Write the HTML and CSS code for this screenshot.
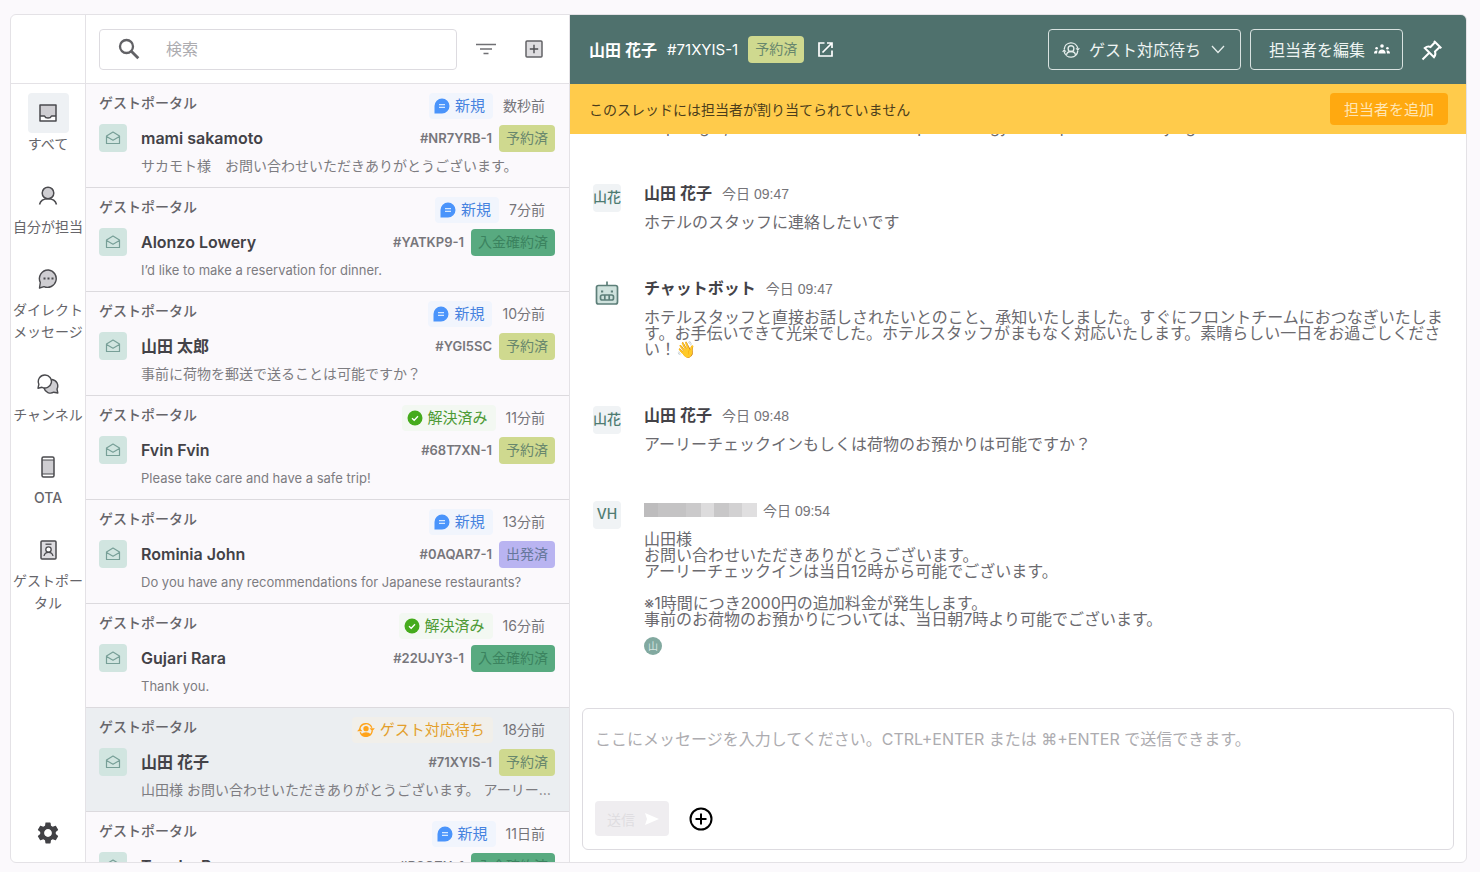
FILE: index.html
```html
<!DOCTYPE html>
<html lang="ja">
<head>
    <meta charset="UTF-8">
    <meta name="viewport" content="width=device-width, initial-scale=1.0">
    <title>メッセージ</title>
    <link rel="stylesheet" href="styles.css">
</head>
<body>
    <!-- shared icons -->
    <svg class="sprite" aria-hidden="true">
        <symbol id="mail" viewBox="0 0 16 16"><path d="M1.5 6 8 2l6.500 4v7.500h-13zM1.500 6.500 8 10.200l6.500-3.700" fill="none" stroke="currentColor" stroke-width="1.200" stroke-linejoin="round"/></symbol>
        <symbol id="new" viewBox="0 0 16 16"><path d="M8 .5a7.500 7.500 0 1 1 0 15H.5V8A7.500 7.500 0 0 1 8 .5z" fill="#4a94fb"/><path d="M5 6.700h6M5 9.300h6" stroke="#d5e8ff" stroke-width="1.200"/></symbol>
        <symbol id="done" viewBox="0 0 16 16"><circle cx="8" cy="8" r="7.500" fill="#45ab1c"/><path d="m5 8.200 2.200 2.100L11 6.300" fill="none" stroke="#fff" stroke-width="1.300"/></symbol>
        <symbol id="wait" viewBox="0 0 20 18"><g fill="none" stroke="currentColor" stroke-width="1.500"><path d="M3 8a7 7 0 0 1 13.500-1.500M17 10A7 7 0 0 1 3.500 11.500"/></g><path d="M14 7h6l-3 3.500zM0 10.500h6L3 7z" fill="currentColor"/><circle cx="10" cy="7.500" r="3" fill="currentColor"/><path d="M4.800 14c2-3.400 8.400-3.400 10.400 0-2.500 3-7.900 3-10.400 0z" fill="currentColor"/></symbol>
    </svg>

    <div class="app">
        <nav class="sidebar">
            <div class="sidebar-top"></div>
            <div class="menu">
                <a href="#" class="menu-item active">
                    <span class="menu-icon"><svg width="20" height="20" viewBox="0 0 20 20"><path d="M2 2h16v16H2z" fill="#cfced2"/><path d="M2 13h4.500c1 3 6 3 7 0H18v5H2z" fill="#fff"/><path d="M2 2h16v16H2zM2 13h4.500c1 2.700 6 2.700 7 0H18" fill="none" stroke="#4a4a4e" stroke-width="1.500" stroke-linejoin="round"/></svg></span>
                    <span>すべて</span>
                </a>
                <a href="#" class="menu-item">
                    <span class="menu-icon"><svg width="20" height="20" viewBox="0 0 20 20"><circle cx="10" cy="7" r="5.800" fill="#cfced2" stroke="#4a4a4e" stroke-width="1.500"/><path d="M1.500 18.500c1-4 4-5.700 8.500-5.700s7.500 1.700 8.500 5.700" fill="none" stroke="#4a4a4e" stroke-width="1.500"/></svg></span>
                    <span>自分が担当</span>
                </a>
                <a href="#" class="menu-item">
                    <span class="menu-icon"><svg width="20" height="20" viewBox="0 0 20 20"><path d="M10.500 1A8.700 8.700 0 1 1 6 17.600L1.500 19l.8-5.500A8.700 8.700 0 0 1 10.500 1z" fill="#cfced2" stroke="#4a4a4e" stroke-width="1.400" stroke-linejoin="round"/><path d="M5.500 9.500h2m2 0h2m2 0h2" stroke="#4a4a4e" stroke-width="2"/></svg></span>
                    <span>ダイレクトメッセージ</span>
                </a>
                <a href="#" class="menu-item">
                    <span class="menu-icon"><svg width="22" height="20" viewBox="0 0 22 20"><path d="M15 5.500a6.500 6.500 0 0 1 5 9.500l.8 4-4-.8A6.700 6.700 0 0 1 7 14z" fill="#cfced2" stroke="#4a4a4e" stroke-width="1.400" stroke-linejoin="round"/><path d="M8 1a6.500 6.500 0 1 1-3 12.300l-4 .9.900-4A6.500 6.500 0 0 1 8 1z" fill="#fff" stroke="#4a4a4e" stroke-width="1.400" stroke-linejoin="round"/></svg></span>
                    <span>チャンネル</span>
                </a>
                <a href="#" class="menu-item">
                    <span class="menu-icon"><svg width="14" height="22" viewBox="0 0 14 22"><rect x="1" y="1" width="12" height="20" rx="1.500" fill="#cfced2"/><path d="M1 1h12v3H1zM1 18h12v3H1z" fill="#fff"/><rect x="1" y="1" width="12" height="20" rx="1.500" fill="none" stroke="#4a4a4e" stroke-width="1.500"/><path d="M1 4h12M1 18h12" stroke="#4a4a4e" stroke-width="1.200"/></svg></span>
                    <span class="menu-latin">OTA</span>
                </a>
                <a href="#" class="menu-item">
                    <span class="menu-icon"><svg width="17" height="20" viewBox="0 0 17 20"><rect x="1" y="1" width="15" height="18" rx="1" fill="#dddce0" stroke="#4a4a4e" stroke-width="1.500"/><path d="M5.500 4.200h6" stroke="#4a4a4e" stroke-width="1.300"/><circle cx="8.500" cy="9.500" r="2.700" fill="#fff" stroke="#4a4a4e" stroke-width="1.300"/><path d="M4 16c.5-2.700 2-3.700 4.500-3.700s4 1 4.500 3.700" fill="none" stroke="#4a4a4e" stroke-width="1.300"/></svg></span>
                    <span>ゲストポータル</span>
                </a>
            </div>
            <button class="settings" aria-label="設定"><svg width="26" height="26" viewBox="0 0 24 24"><path fill="#414145" d="M19.140 12.940c.04-.3.060-.61.060-.94 0-.32-.02-.64-.07-.94l2.030-1.580a.49.49 0 0 0 .12-.61l-1.920-3.320a.488.488 0 0 0-.59-.22l-2.390.96c-.5-.38-1.030-.7-1.620-.94l-.36-2.540a.484.484 0 0 0-.48-.41h-3.840c-.24 0-.43.17-.47.41l-.36 2.540c-.59.24-1.130.57-1.620.94l-2.390-.96c-.22-.08-.47 0-.59.22L2.740 8.870c-.12.21-.08.47.12.610l2.030 1.580c-.05.3-.09.63-.09.940s.02.64.07.940l-2.030 1.580a.49.49 0 0 0-.12.610l1.920 3.320c.12.22.37.29.59.22l2.390-.96c.5.38 1.030.7 1.620.94l.36 2.540c.05.24.24.41.48.410h3.840c.24 0 .44-.17.47-.41l.36-2.540c.59-.24 1.130-.56 1.620-.94l2.390.96c.22.08.47 0 .59-.22l1.920-3.320c.12-.22.070-.47-.12-.61l-2.010-1.580zM12 15.600c-1.980 0-3.600-1.620-3.600-3.600s1.620-3.600 3.600-3.600 3.600 1.620 3.600 3.600-1.620 3.600-3.600 3.600z"/></svg></button>
        </nav>

        <section class="inbox">
            <div class="inbox-top">
                <label class="search">
                    <svg width="22" height="22" viewBox="0 0 22 22"><circle cx="8.500" cy="8.500" r="6.500" fill="none" stroke="#626266" stroke-width="2.300"/><path d="m13.300 13.300 7 7" stroke="#626266" stroke-width="2.800"/></svg>
                    <input type="search" placeholder="検索" aria-label="検索">
                </label>
                <button class="icon-btn" aria-label="絞り込み"><svg width="20" height="12" viewBox="0 0 20 12"><path d="M0 1.500h20M4 6h12M7.500 10.500h5" stroke="#707074" stroke-width="1.500"/></svg></button>
                <button class="icon-btn" aria-label="新規作成"><svg width="18" height="18" viewBox="0 0 18 18"><rect x="1" y="1" width="16" height="16" rx="1" fill="#dedde0" stroke="#626266" stroke-width="1.500"/><path d="M9 4.800v8.400M4.800 9h8.400" stroke="#4e4e52" stroke-width="1.400"/></svg></button>
            </div>
            <ul class="threads">
                <li class="thread">
                    <div class="thread-meta"><span class="source">ゲストポータル</span><span class="status new"><svg><use href="#new"/></svg>新規</span><time>数秒前</time></div>
                    <div class="thread-guest"><span class="mail"><svg><use href="#mail"/></svg></span><a href="#" class="guest">mami sakamoto</a><span class="code">#NR7YRB-1</span><span class="badge booked">予約済</span></div>
                    <p>サカモト様　お問い合わせいただきありがとうございます。</p>
                </li>
                <li class="thread">
                    <div class="thread-meta"><span class="source">ゲストポータル</span><span class="status new"><svg><use href="#new"/></svg>新規</span><time>7分前</time></div>
                    <div class="thread-guest"><span class="mail"><svg><use href="#mail"/></svg></span><a href="#" class="guest">Alonzo Lowery</a><span class="code">#YATKP9-1</span><span class="badge paid">入金確約済</span></div>
                    <p lang="en">I’d like to make a reservation for dinner.</p>
                </li>
                <li class="thread">
                    <div class="thread-meta"><span class="source">ゲストポータル</span><span class="status new"><svg><use href="#new"/></svg>新規</span><time>10分前</time></div>
                    <div class="thread-guest"><span class="mail"><svg><use href="#mail"/></svg></span><a href="#" class="guest">山田 太郎</a><span class="code">#YGI5SC</span><span class="badge booked">予約済</span></div>
                    <p>事前に荷物を郵送で送ることは可能ですか？</p>
                </li>
                <li class="thread">
                    <div class="thread-meta"><span class="source">ゲストポータル</span><span class="status done"><svg><use href="#done"/></svg>解決済み</span><time>11分前</time></div>
                    <div class="thread-guest"><span class="mail"><svg><use href="#mail"/></svg></span><a href="#" class="guest">Fvin Fvin</a><span class="code">#68T7XN-1</span><span class="badge booked">予約済</span></div>
                    <p lang="en">Please take care and have a safe trip!</p>
                </li>
                <li class="thread">
                    <div class="thread-meta"><span class="source">ゲストポータル</span><span class="status new"><svg><use href="#new"/></svg>新規</span><time>13分前</time></div>
                    <div class="thread-guest"><span class="mail"><svg><use href="#mail"/></svg></span><a href="#" class="guest">Rominia John</a><span class="code">#0AQAR7-1</span><span class="badge left">出発済</span></div>
                    <p lang="en">Do you have any recommendations for Japanese restaurants?</p>
                </li>
                <li class="thread">
                    <div class="thread-meta"><span class="source">ゲストポータル</span><span class="status done"><svg><use href="#done"/></svg>解決済み</span><time>16分前</time></div>
                    <div class="thread-guest"><span class="mail"><svg><use href="#mail"/></svg></span><a href="#" class="guest">Gujari Rara</a><span class="code">#22UJY3-1</span><span class="badge paid">入金確約済</span></div>
                    <p lang="en">Thank you.</p>
                </li>
                <li class="thread selected">
                    <div class="thread-meta"><span class="source">ゲストポータル</span><span class="status wait"><svg><use href="#wait"/></svg>ゲスト対応待ち</span><time>18分前</time></div>
                    <div class="thread-guest"><span class="mail"><svg><use href="#mail"/></svg></span><a href="#" class="guest">山田 花子</a><span class="code">#71XYIS-1</span><span class="badge booked">予約済</span></div>
                    <p>山田様 お問い合わせいただきありがとうございます。 アーリーチェックインは当日12時から可能でございます。</p>
                </li>
                <li class="thread">
                    <div class="thread-meta"><span class="source">ゲストポータル</span><span class="status new"><svg><use href="#new"/></svg>新規</span><time>11日前</time></div>
                    <div class="thread-guest"><span class="mail"><svg><use href="#mail"/></svg></span><a href="#" class="guest">Tanaka R</a><span class="code">#B8GZH-1</span><span class="badge paid">入金確約済</span></div>
                </li>
            </ul>
        </section>

        <main class="chat">
            <header class="chat-top">
                <h1>山田 花子</h1>
                <span class="chat-code">#71XYIS-1</span>
                <span class="badge booked">予約済</span>
                <a href="#" class="open" aria-label="予約を開く"><svg width="15" height="15" viewBox="0 0 15 15"><path d="M6.500 1H1v13h13V8.500M9 1h5v5M14 1 4.500 10.500" fill="none" stroke="#fff" stroke-width="1.700"/></svg></a>
                <label class="outline state">
                    <svg width="18" height="18" viewBox="0 0 20 20" fill="none" stroke="#e4edeb" stroke-width="1.500"><path d="M2.500 9a7.600 7.600 0 0 1 15-1M17.500 11a7.600 7.600 0 0 1-15 1"/><path d="M15 8h5l-2.500 3zM0 12h5L2.500 9z" fill="#e4edeb" stroke="none"/><circle cx="10" cy="8.500" r="3.200"/><path d="M5 15.500c.5-2.700 2-3.800 5-3.800s4.500 1.100 5 3.800"/></svg>
                    <select aria-label="ステータス"><option>ゲスト対応待ち</option><option>新規</option><option>解決済み</option></select>
                    <svg width="14" height="9" viewBox="0 0 14 9"><path d="m1 1 6 6.500L13 1" fill="none" stroke="#e4edeb" stroke-width="1.300"/></svg>
                </label>
                <button class="outline">担当者を編集<svg width="16" height="10" viewBox="0 0 16 10" fill="#fff"><circle cx="8" cy="2" r="1.800"/><circle cx="2.600" cy="4.200" r="1.300"/><circle cx="13.400" cy="4.200" r="1.300"/><path d="M4.300 9.500c0-5.500 7.400-5.500 7.400 0zM0 9.500c0-2.500 1.200-3.300 3.500-3l-.5 3zM16 9.500c0-2.500-1.200-3.300-3.500-3l.5 3z"/></svg></button>
                <button class="pin" aria-label="固定"><svg width="22" height="22" viewBox="0 0 22 22" fill="none" stroke="#fff" stroke-width="2"><path d="m13 2 7.300 7.300M14 3.200 9.500 8C7.500 7.200 5.500 7.700 3.800 9l9.200 9.200c1.300-1.700 1.800-3.700 1-5.700l4.800-4.500M8.300 13.700 1.500 20.500"/></svg></button>
            </header>
            <div class="notice">
                <span>このスレッドには担当者が割り当てられていません</span>
                <button>担当者を追加</button>
            </div>
            <div class="messages">
                <article class="message">
                    <span class="avatar bot"></span>
                    <div class="message-body">
                        <p lang="en">Thank you for your message.<br>The hotel offers<br>a spa right, the wellness center and pure energy in the park before trying it.</p>
                    </div>
                </article>
                <article class="message">
                    <span class="avatar">山花</span>
                    <div class="message-body">
                        <div class="message-head"><strong>山田 花子</strong><time>今日 09:47</time></div>
                        <p>ホテルのスタッフに連絡したいです</p>
                    </div>
                </article>
                <article class="message">
                    <span class="avatar bot"><svg width="24" height="24" viewBox="0 0 24 24" fill="#cfe2dd" stroke="#5d7f79" stroke-width="1.700"><path d="M12 .5V5"/><rect x="1.500" y="4.500" width="21" height="18.500" rx="2"/><rect x="5.500" y="14" width="13" height="5" rx="1.800"/><path d="M9.800 14v5M14.200 14v5"/><path d="M6 10.500h2.200M15.800 10.500H18" stroke-width="1.800"/></svg></span>
                    <div class="message-body">
                        <div class="message-head"><strong>チャットボット</strong><time>今日 09:47</time></div>
                        <p>ホテルスタッフと直接お話しされたいとのこと、承知いたしました。すぐにフロントチームにおつなぎいたします。お手伝いできて光栄でした。ホテルスタッフがまもなく対応いたします。素晴らしい一日をお過ごしください！👋</p>
                    </div>
                </article>
                <article class="message">
                    <span class="avatar">山花</span>
                    <div class="message-body">
                        <div class="message-head"><strong>山田 花子</strong><time>今日 09:48</time></div>
                        <p>アーリーチェックインもしくは荷物のお預かりは可能ですか？</p>
                    </div>
                </article>
                <article class="message">
                    <span class="avatar">VH</span>
                    <div class="message-body">
                        <div class="message-head"><span class="masked"></span><time>今日 09:54</time></div>
                        <p>山田様<br>お問い合わせいただきありがとうございます。<br>アーリーチェックインは当日12時から可能でございます。<br><br>※1時間につき2000円の追加料金が発生します。<br>事前のお荷物のお預かりについては、当日朝7時より可能でございます。</p>
                        <span class="reader">山</span>
                    </div>
                </article>
            </div>
            <form class="composer">
                <textarea aria-label="メッセージ" placeholder="ここにメッセージを入力してください。CTRL+ENTER または ⌘+ENTER で送信できます。"></textarea>
                <div class="composer-actions">
                    <button type="submit" class="send" disabled>送信<svg width="14" height="12" viewBox="0 0 14 12"><path d="m0 0 14 6-14 6 2-6z" fill="#fff"/></svg></button>
                    <button type="button" class="attach" aria-label="追加"><svg width="24" height="24" viewBox="0 0 24 24" fill="none" stroke="#000" stroke-width="2"><circle cx="12" cy="12" r="10.500"/><path d="M12 6.500v11M6.500 12h11"/></svg></button>
                </div>
            </form>
        </main>
    </div>
</body>
</html>
```
FILE: styles.css
```css
* {
    box-sizing: border-box;
}
body {
    margin: 0;
    height: 100vh;
    padding: 14px 13px 9px 10px;
    background: #fbf9fc;
    color: #66656a;
    font-family: Inter, "Noto Sans CJK JP", sans-serif;
    font-size: 14px;
}
button, input, select, textarea {
    font: inherit;
    color: inherit;
    border: 0;
    background: none;
    padding: 0;
    outline: none;
}
button {
    cursor: pointer;
}
a {
    color: inherit;
    text-decoration: none;
}
p, h1, ul {
    margin: 0;
    padding: 0;
}
svg {
    display: block;
    flex: none;
}
.sprite {
    position: absolute;
    width: 0;
    height: 0;
}
.app {
    display: flex;
    height: 100%;
    background: #fff;
    border: 1px solid #e4e2e6;
    border-radius: 6px;
    overflow: hidden;
}

/* sidebar */
.sidebar {
    display: flex;
    flex-direction: column;
    width: 75px;
    flex: none;
    border-right: 1px solid #e4e2e6;
}
.sidebar-top {
    height: 69px;
    flex: none;
    border-bottom: 1px solid #e4e2e6;
}
.menu {
    display: flex;
    flex-direction: column;
    gap: 21px;
    flex: 1;
    padding-top: 9px;
}
.menu-item {
    display: flex;
    flex-direction: column;
    align-items: center;
    line-height: 22px;
    text-align: center;
    color: #66656a;
}
.menu-latin {
    font-weight: 500;
}
.menu-icon {
    display: flex;
    align-items: center;
    justify-content: center;
    width: 41px;
    height: 40px;
    border-radius: 4px;
}
.active .menu-icon {
    background: #eef1f4;
}
.settings {
    align-self: center;
    margin-bottom: 16px;
}

/* thread list */
.inbox {
    display: flex;
    flex-direction: column;
    width: 484px;
    flex: none;
    border-right: 1px solid #e4e2e6;
}
.inbox-top {
    display: flex;
    align-items: center;
    height: 69px;
    flex: none;
    gap: 10px;
    padding: 0 16px 0 13px;
    border-bottom: 1px solid #e4e2e6;
}
.search {
    display: flex;
    align-items: center;
    gap: 26px;
    flex: 1;
    height: 41px;
    padding: 0 18px;
    border: 1px solid #dddbe0;
    border-radius: 4px;
}
.search input {
    flex: 1;
    min-width: 0;
    font-size: 16px;
}
::placeholder {
    color: #adacb0;
    opacity: 1;
}
.icon-btn {
    display: flex;
    align-items: center;
    justify-content: center;
    width: 38px;
    height: 38px;
}
.threads {
    flex: 1;
    min-height: 0;
    overflow: hidden;
    list-style: none;
    background: #fbf9fc;
}
.thread {
    height: 104px;
    padding: 9px 14px 0 13px;
    border-bottom: 1px solid #dcdade;
}
.thread.selected {
    background: #ebeef1;
}
.thread-meta {
    display: flex;
    height: 26px;
    line-height: 26px;
    padding-right: 10px;
}
.source {
    flex: 1;
    font-weight: 500;
    line-height: 20px;
}
.thread-meta time {
    margin-left: 10px;
    color: #757479;
}
.status {
    display: flex;
    align-items: center;
    gap: 5px;
    padding: 0 8px 0 5px;
    border-radius: 4px;
    font-size: 15px;
}
.status svg {
    width: 16px;
    height: 16px;
}
.status.new {
    color: #4783e0;
    background: #f1f5fd;
}
.status.done {
    color: #4d9a35;
    background: #f3f8f2;
}
.status.wait {
    color: #e39f2c;
    background: #f1efea;
}
.status.wait svg {
    width: 18px;
    color: #ffa31a;
}
.thread-guest {
    display: flex;
    align-items: center;
    height: 28px;
    margin-top: 5px;
}
.mail {
    display: flex;
    align-items: center;
    justify-content: center;
    width: 28px;
    height: 28px;
    margin-right: 14px;
    border-radius: 4px;
    color: #779f97;
    background: #d1e5e0;
}
.mail svg {
    width: 16px;
    height: 16px;
}
.guest {
    flex: 1;
    font-size: 16px;
    line-height: 26px;
    font-weight: 600;
    color: #434247;
}
.code {
    margin-right: 7px;
    font-size: 13px;
    font-weight: 600;
    color: #77767b;
}
.badge {
    height: 27px;
    line-height: 26px;
    padding: 0 7px;
    border-radius: 4px;
}
.badge.booked {
    color: #68876d;
    background: #cfd98f;
}
.badge.paid {
    color: #3b835f;
    background: #58aa80;
}
.badge.left {
    color: #66789b;
    background: #b9b4f1;
}
.thread p {
    margin-left: 42px;
    line-height: 28px;
    color: #7d7c81;
    white-space: nowrap;
    overflow: hidden;
    text-overflow: ellipsis;
}
.thread p:lang(en) {
    font-size: 13px;
}

/* conversation */
.chat {
    display: flex;
    flex-direction: column;
    flex: 1;
    min-width: 0;
}
.chat-top {
    display: flex;
    align-items: center;
    height: 69px;
    flex: none;
    padding: 0 23px 0 19px;
    color: #fff;
    background: #4f716d;
    font-size: 16px;
}
.chat-top h1 {
    font-size: 16px;
    line-height: 26px;
    font-weight: 600;
}
.chat-code {
    margin: 0 10px;
    font-size: 15px;
}
.chat-top .badge {
    font-size: 14px;
}
.open {
    margin-left: 14px;
    margin-right: auto;
}
.outline {
    display: flex;
    align-items: center;
    gap: 9px;
    height: 41px;
    margin-left: 9px;
    padding: 0 12px 2px 18px;
    border: 1px solid #d8e2e0;
    border-radius: 4px;
    color: #eef4f2;
}
.outline.state {
    padding: 0 15px 0 13px;
}
.state select {
    appearance: none;
    cursor: pointer;
}
.state option {
    color: #434247;
}
.pin {
    margin-left: 18px;
}
.notice {
    display: flex;
    align-items: center;
    justify-content: space-between;
    height: 50px;
    flex: none;
    padding: 0 18px 0 19px;
    color: #4b3d1b;
    background: #ffcb4b;
}
.notice button {
    height: 32px;
    padding: 0 14px 2px;
    border-radius: 4px;
    font-size: 15px;
    color: #ffe6b5;
    background: #ffa910;
}
.messages {
    display: flex;
    flex-direction: column;
    justify-content: flex-end;
    gap: 47px;
    flex: 1;
    min-height: 0;
    overflow: hidden;
    padding: 0 14px 53px 23px;
}
.message {
    display: flex;
    gap: 23px;
}
.avatar {
    width: 28px;
    height: 28px;
    flex: none;
    margin-top: 2px;
    border-radius: 4px;
    line-height: 26px;
    text-align: center;
    font-weight: 500;
    color: #4f7c72;
    background: #f0f3f5;
}
.avatar:lang(en) {
    font-weight: 600;
}
.avatar.bot {
    display: flex;
    align-items: center;
    justify-content: center;
    background: none;
}
.message-body {
    min-width: 0;
}
.message-head {
    display: flex;
    align-items: center;
    height: 22px;
    margin-bottom: 10px;
}
.message-head strong {
    margin-right: 10px;
    font-size: 16px;
    line-height: 24px;
    font-weight: 600;
    color: #434247;
}
.message-head time {
    font-family: "Liberation Sans", "Noto Sans CJK JP", sans-serif;
    color: #757479;
}
.message p {
    font-size: 16px;
    line-height: 16px;
    color: #6b6a6f;
}
.masked {
    width: 113px;
    height: 14px;
    margin-right: 6px;
    background: linear-gradient(90deg, #bdbcbd 0 12%, #c4c3c4 12% 37%, #cbcacb 37% 50%, #dddcdd 50% 62%, #c8c7c8 62% 75%, #d2d1d2 75% 87%, #e0dfe0 87%);
}
.reader {
    display: block;
    width: 18px;
    height: 18px;
    margin-top: 10px;
    border-radius: 50%;
    line-height: 18px;
    text-align: center;
    font-size: 10px;
    color: #d5e6e1;
    background: #82a9a0;
}
.composer {
    display: flex;
    flex-direction: column;
    height: 142px;
    flex: none;
    margin: 0 12px 12px;
    padding: 18px 12px 13px;
    border: 1px solid #dddbe0;
    border-radius: 6px;
}
.composer textarea {
    flex: 1;
    resize: none;
    font-size: 16px;
    line-height: 24px;
}
.composer-actions {
    display: flex;
    align-items: center;
    gap: 20px;
}
.send {
    display: flex;
    align-items: center;
    gap: 10px;
    height: 35px;
    padding: 0 10px 0 12px;
    border-radius: 4px;
    color: #dfdde1;
    background: #efedf0;
}
```
